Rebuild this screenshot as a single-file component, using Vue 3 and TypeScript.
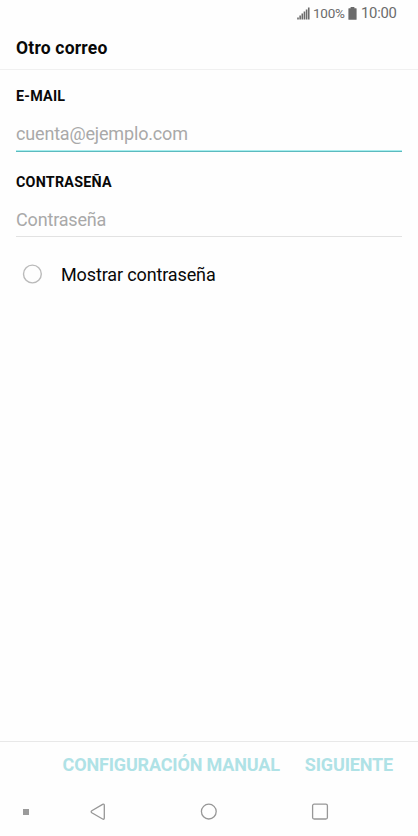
<script setup lang="ts">
import { ref } from 'vue'

const email = ref('')
const password = ref('')
const showPassword = ref(false)
const signalBars: number[] = [2, 4, 6, 8, 10, 12]
</script>

<template>
  <div class="screen">
    <div class="status">
      <svg class="signal" width="13" height="13" viewBox="0 0 13 13">
        <rect v-for="(h, i) in signalBars" :key="i" :x="i * 2.15 + 0.2" :y="12.5 - h" width="1.6" :height="h" />
      </svg>
      <span class="percent">100%</span>
      <svg class="battery" width="9" height="13" viewBox="0 0 9 13">
        <path d="M2.6 0h3.8v1.2H8.1q.5 0 .5.5v10.6q0 .5-.5.5H.9q-.5 0-.5-.5V1.7q0-.5.5-.5h1.7z" />
      </svg>
      <span class="clock">10:00</span>
    </div>
    <header class="title">Otro correo</header>
    <main class="form">
      <label class="label" for="email">E-MAIL</label>
      <input id="email" v-model="email" class="field active" type="text" placeholder="cuenta@ejemplo.com" />
      <label class="label second" for="password">CONTRASEÑA</label>
      <input id="password" v-model="password" class="field" :type="showPassword ? 'text' : 'password'" placeholder="Contraseña" />
      <div class="toggle" @click="showPassword = !showPassword">
        <svg width="20" height="20" viewBox="0 0 20 20">
          <circle cx="10.4" cy="10" r="8.9" fill="none" stroke="#bababa" stroke-width="1.4" />
          <circle v-if="showPassword" cx="10.4" cy="10" r="5" fill="#4fc0c4" />
        </svg>
        <span class="toggle-text">Mostrar contraseña</span>
      </div>
    </main>
    <footer class="actions">
      <button class="manual">CONFIGURACIÓN MANUAL</button>
      <button class="next">SIGUIENTE</button>
    </footer>
    <nav class="nav">
      <span class="dot"></span>
      <svg class="back" width="16" height="18" viewBox="0 0 16 18">
        <path d="M12.6 1.4L1.8 7.7q-1.3 1 0 2l10.8 6.3q1.7.8 1.7-.9V2.3q0-1.7-1.7-.9z" />
      </svg>
      <svg class="home" width="18" height="18" viewBox="0 0 18 18"><circle cx="8.8" cy="8.6" r="7.4" /></svg>
      <svg class="recent" width="18" height="18" viewBox="0 0 18 18"><rect x="1.6" y="1.2" width="14.8" height="14.8" rx="1.5" /></svg>
    </nav>
  </div>
</template>

<style>
body { background: #fefefe; }
</style>

<style scoped>
.screen { height: 836px; display: flex; flex-direction: column; overflow: hidden; background: #fefefe; color: #080808; font-family: Roboto, sans-serif; }
.status { height: 26px; box-sizing: border-box; padding-right: 21px; display: flex; justify-content: flex-end; align-items: center; color: #6b6b6b; white-space: nowrap; }
.status svg { fill: #6b6b6b; }
.signal { margin-right: 3px; }
.percent { width: 31px; padding-bottom: 1px; font-size: 13.5px; letter-spacing: -0.25px; }
.battery { margin: 0 4px; }
.clock { width: 36px; font-size: 14.8px; letter-spacing: -0.25px; }
.title { height: 44px; box-sizing: border-box; border-bottom: 1px solid #f0f0f0; padding-left: 16px; line-height: 44px; font-size: 17.5px; font-weight: 700; letter-spacing: 0.2px; }
.form { flex: 1; padding: 16px 16px 0; display: flex; flex-direction: column; }
.label { height: 20px; line-height: 20px; font-size: 14.3px; font-weight: 700; letter-spacing: 0.25px; }
.field { height: 45px; box-sizing: border-box; width: 386px; border: 0; border-bottom: 1px solid #e2e2e2; border-radius: 0; outline: 0; padding: 10px 0 0; background: transparent; color: #080808; font: 400 18px Roboto, sans-serif; letter-spacing: -0.17px; }
.field.active { height: 46px; padding-top: 11px; padding-bottom: 1px; border-bottom-color: #5cbabf; box-shadow: inset 0 -1px #a7eeee; }
.field::placeholder { color: #a9a9a9; opacity: 1; }
.second { margin-top: 20px; }
.toggle { margin-top: 25px; padding-left: 6px; height: 24px; display: flex; align-items: center; gap: 19px; }
.toggle-text { padding-top: 2px; font-size: 18px; line-height: 22px; letter-spacing: -0.13px; }
.actions { height: 46px; border-top: 1px solid #e8e8e8; display: flex; justify-content: flex-end; gap: 25px; padding-right: 25px; }
.actions button { border: 0; padding: 0 0 2px; background: transparent; color: #afe2e6; font: 700 18px Roboto, sans-serif; letter-spacing: -0.16px; white-space: nowrap; }
.nav { height: 48px; display: flex; align-items: center; padding-left: 23px; }
.nav svg { fill: none; stroke: #979797; stroke-width: 1.3; }
.dot { width: 6px; height: 6px; background: #9b9b9b; }
.back { margin-left: 61px; }
.home { margin-left: 94px; }
.recent { margin-left: 93px; }
</style>
